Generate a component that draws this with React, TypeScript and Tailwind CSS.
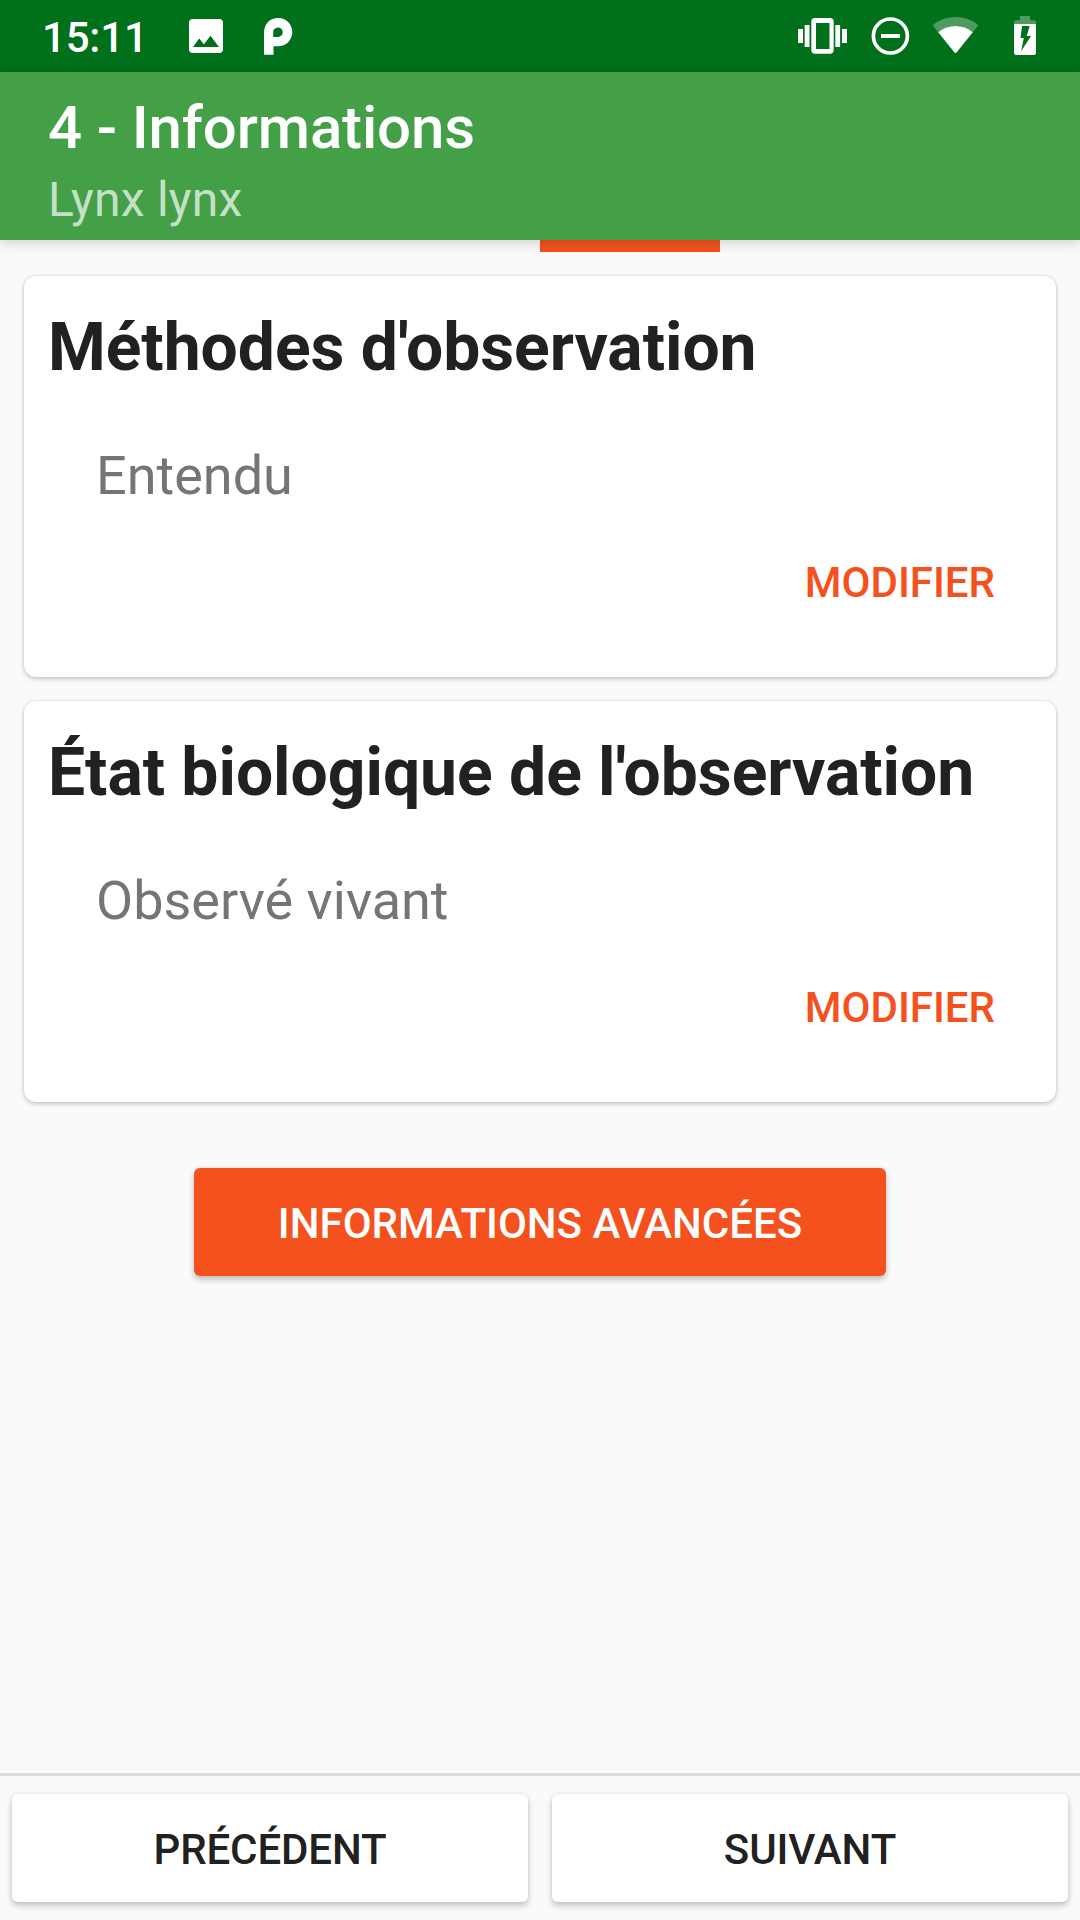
function StatusBar() {
  return (
    <div className="flex h-[72px] shrink-0 items-start bg-[#00701a] text-white">
      <span className="ml-[42px] mt-[14px] w-[147px] text-[42px] font-medium leading-[48px] tracking-[-0.2px]">15:11</span>
      <svg className="h-[72px] w-[34px]" viewBox="189 0 34 72" fill="currentColor">
        <path fillRule="evenodd" d="M193 19h26a4 4 0 0 1 4 4v26a4 4 0 0 1-4 4h-26a4 4 0 0 1-4-4v-26a4 4 0 0 1 4-4zM193 47h26l-8.5-11.3-6.6 8.5-4.7-5.6z" />
      </svg>
      <svg className="ml-[41px] h-[72px] w-[29px]" viewBox="264 0 29 72" fill="currentColor">
        <path fillRule="evenodd" d="M264 54.7V32.5C264 24 270 18 278 18S292.3 24 292.3 32 286 46.3 278 46.3H273.5V54.7zM273.2 37H278A4.8 4.8 0 1 0 273.2 32.3z" />
      </svg>
      <svg className="ml-[505px] h-[72px] w-[49px]" viewBox="798 0 49 72" fill="currentColor">
        <path d="M798 29h5v14h-5zM804.7 25h4.8v22h-4.8zM835.3 25h4.8v22h-4.8zM842 29h5v14h-5z" />
        <path fillRule="evenodd" d="M815 18h15a3.7 3.7 0 0 1 3.7 3.7v28.3a3.7 3.7 0 0 1-3.7 3.7h-15a3.7 3.7 0 0 1-3.7-3.7v-28.3a3.7 3.7 0 0 1 3.7-3.7zM816 23v26h13.5v-26z" />
      </svg>
      <svg className="ml-[24px] h-[72px] w-[39px]" viewBox="871 0 39 72" fill="none" stroke="currentColor">
        <circle cx="890.4" cy="36" r="17" strokeWidth="3.7" />
        <path d="M881 36h19" strokeWidth="4" />
      </svg>
      <svg className="ml-[22px] h-[72px] w-[47px]" viewBox="932 0 47 72" fill="currentColor">
        <path opacity="0.3" d="M932.7 25.2C945.5 14.3 965.5 14.3 978.3 25.2L972.8 32.3C963 24 948 24 938.2 32.3z" />
        <path d="M938.2 32.3C948 24 963 24 972.8 32.3L956.7 52.3Q955.5 53.6 954.3 52.3z" />
      </svg>
      <svg className="ml-[35px] h-[72px] w-[22px]" viewBox="1014 0 22 72" fill="currentColor">
        <path opacity="0.3" d="M1020 16h10v4.3h4q2 0 2 2V24h-22v-1.7q0-2 2-2h4z" />
        <path fillRule="evenodd" d="M1014 24h22v29q0 2-2 2h-18q-2 0-2-2zM1022 26l-1.5 12h3.3l-2.6 13 9.9-15h-4.4l3-10z" />
      </svg>
    </div>
  );
}

function AppBar() {
  return (
    <header className="relative z-10 h-[168px] shrink-0 bg-[#43a047] px-12 pt-[21px] shadow-[0_3px_12px_rgba(0,0,0,0.17)]">
      <h1 className="text-[60px] font-medium leading-[70px] tracking-[-0.15px] text-white">4 - Informations</h1>
      <p className="mt-[9px] text-[48px] leading-[56px] tracking-[0.25px] text-white/70">Lynx lynx</p>
    </header>
  );
}

function InfoCard({ title, value }: { title: string; value: string }) {
  return (
    <section className="flex h-[401px] flex-col rounded-[12px] bg-white px-6 pt-[33px] shadow-[0_2px_5px_rgba(0,0,0,0.2),0_0_3px_rgba(0,0,0,0.1)]">
      <h2 className="whitespace-nowrap text-[66px] font-bold leading-[78px] tracking-[-0.03px] text-[#212121]">{title}</h2>
      <p className="mt-[57px] pl-12 text-[54px] leading-[64px] text-[#757575]">{value}</p>
      <button className="mr-[37px] mt-[51px] self-end text-[42px] font-medium leading-[48px] text-[#f4511e]">MODIFIER</button>
    </section>
  );
}

function NavButton({ label }: { label: string }) {
  return (
    <button className="h-[108px] flex-1 rounded-[6px] bg-white pt-[3px] text-[42px] font-medium tracking-[-0.1px] text-[#212121] shadow-[0_4px_6px_rgba(0,0,0,0.2),0_0_4px_rgba(0,0,0,0.1)]">
      {label}
    </button>
  );
}

export default function App() {
  return (
    <div className="flex h-[1920px] w-[1080px] flex-col overflow-hidden bg-[#fafafa] font-['Roboto',sans-serif]">
      <StatusBar />
      <AppBar />
      <div className="ml-[540px] h-3 w-[180px] shrink-0 bg-[#f4511e]" />
      <main className="flex flex-1 flex-col gap-6 px-6 pt-6">
        <InfoCard title="Méthodes d'observation" value="Entendu" />
        <InfoCard title="État biologique de l'observation" value="Observé vivant" />
        <button className="mt-[42px] h-[108px] w-[692px] self-center rounded-[6px] bg-[#f4511e] pt-[3px] text-[42px] font-medium text-white shadow-[0_4px_6px_rgba(0,0,0,0.2),0_0_4px_rgba(0,0,0,0.1)]">
          INFORMATIONS AVANCÉES
        </button>
      </main>
      <footer className="flex h-[147px] shrink-0 gap-6 border-t-[3px] border-[#dcdcdc] px-3 pt-[18px]">
        <NavButton label="PRÉCÉDENT" />
        <NavButton label="SUIVANT" />
      </footer>
    </div>
  );
}
